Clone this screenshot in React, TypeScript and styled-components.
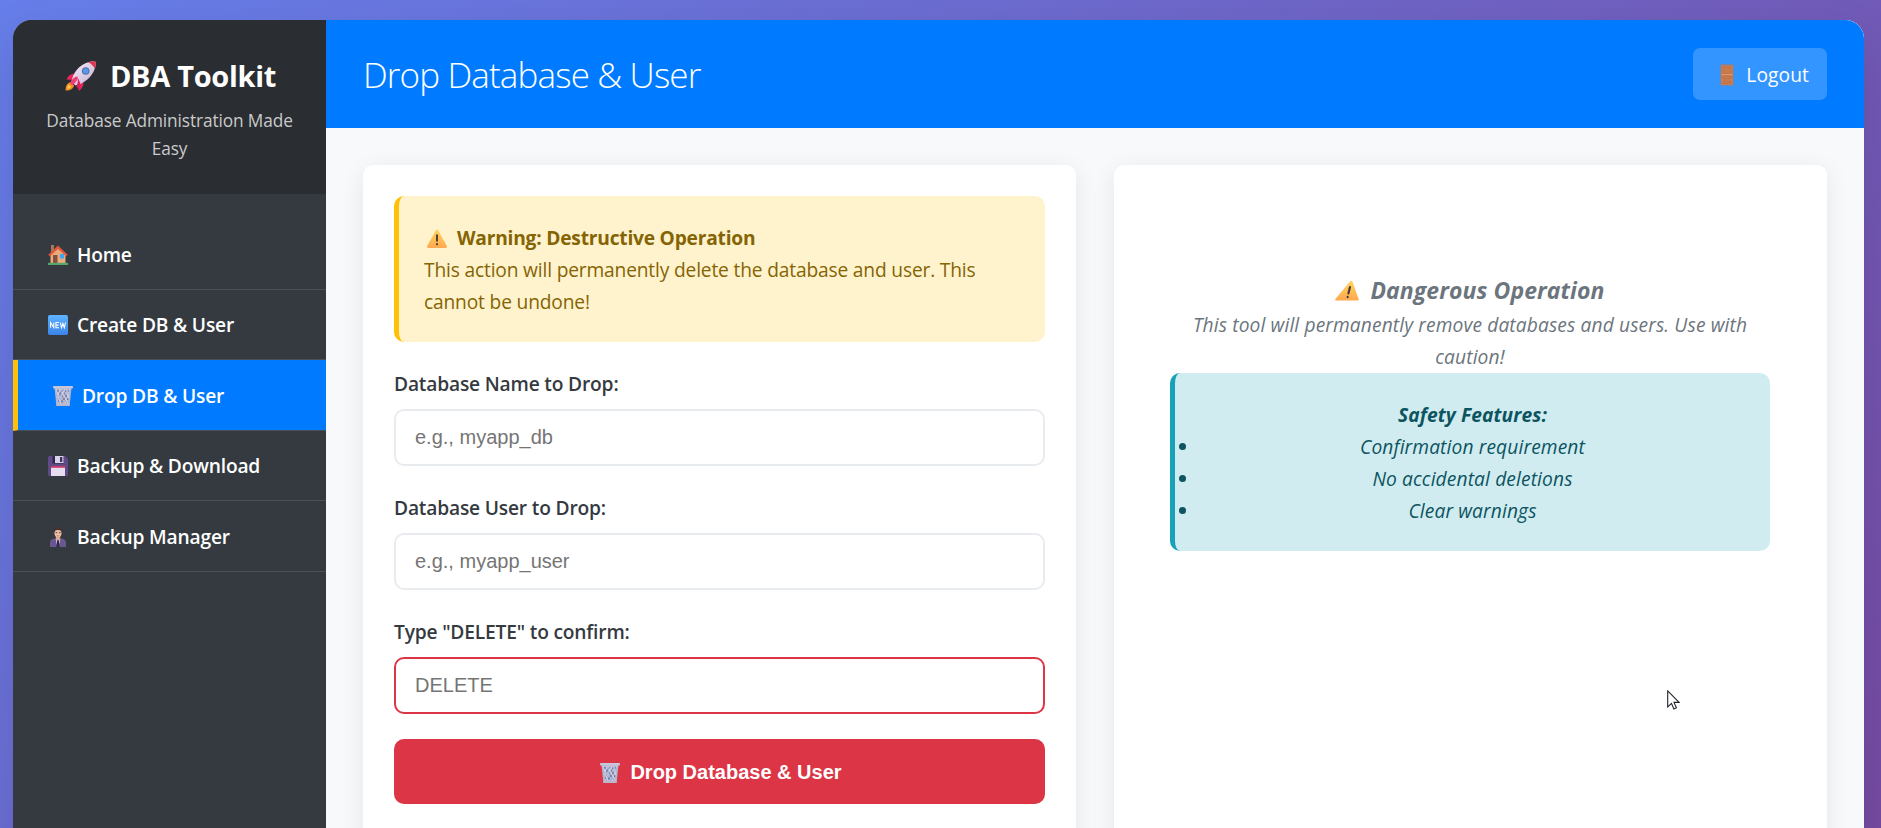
import React from 'react';
import styled, { createGlobalStyle } from 'styled-components';

const GlobalStyle = createGlobalStyle`
  *, *::before, *::after { box-sizing: border-box; margin: 0; padding: 0; }
  body {
    font-family: 'Open Sans', 'Noto Sans', sans-serif;
    font-size: 19.2px;
    line-height: 32px;
    letter-spacing: -0.17px;
    color: #343a40;
    overflow: hidden;
  }
`;

const Page = styled.div`
  position: relative;
  height: 828px;
  padding: 20px 17px 0 13px;
  overflow: hidden;
  background: linear-gradient(135deg, #667eea 0%, #764ba2 100%);
`;

const Shell = styled.div`
  display: flex;
  height: 870px;
  border-radius: 18.75px;
  overflow: hidden;
  background: #fff;
  box-shadow: 0 20px 50px rgba(0, 0, 0, 0.12);
`;

const Sidebar = styled.aside`
  flex: 0 0 313px;
  background: #343a40;
  color: #fff;
`;

const Brand = styled.div`
  height: 174px;
  padding: 32px 25px 0;
  text-align: center;
  background: #2a2d31;
`;

const BrandTitle = styled.h1`
  display: flex;
  justify-content: center;
  align-items: center;
  gap: 14px;
  height: 48px;
  margin-bottom: 7px;
  padding-left: 2px;
  font-size: 29px;
  font-weight: 700;
  letter-spacing: -0.3px;
`;

const BrandText = styled.p`
  font-size: 17.3px;
  line-height: 28px;
  letter-spacing: -0.12px;
  color: #c9cacb;
`;

const Nav = styled.nav`
  padding-top: 25px;
`;

const NavItem = styled.a<{ $active?: boolean }>`
  display: flex;
  align-items: center;
  gap: 9px;
  height: 70.5px;
  padding: 2px 0 0 35px;
  border-bottom: 1px solid #495057;
  border-left: ${(p) => (p.$active ? '5px solid #ffc107' : '0')};
  background: ${(p) => (p.$active ? '#007bff' : 'transparent')};
  color: #fff;
  font-weight: 600;
  letter-spacing: -0.19px;
`;

const Main = styled.main`
  flex: 1;
  background: #f8f9fa;
`;

const TopBar = styled.header`
  display: flex;
  justify-content: space-between;
  align-items: center;
  height: 108px;
  padding: 0 37px;
  background: #007bff;
  color: #fff;
`;

const PageTitle = styled.h2`
  padding-top: 2px;
  font-size: 35px;
  font-weight: 300;
  letter-spacing: -0.86px;
`;

const Logout = styled.a`
  display: flex;
  align-items: center;
  justify-content: flex-end;
  gap: 11px;
  width: 134px;
  height: 52px;
  padding: 2px 18px 0 0;
  border-radius: 7px;
  background: rgba(255, 255, 255, 0.2);
  letter-spacing: 0.1px;
`;

const Content = styled.div`
  display: grid;
  grid-template-columns: 1fr 1fr;
  gap: 38px;
  height: 800px;
  padding: 37px;
`;

const Card = styled.section`
  padding: 31px;
  border-radius: 10px;
  background: #fff;
  box-shadow: 0 5px 25px rgba(0, 0, 0, 0.08);
`;

const Alert = styled.div<{ $tone: 'warning' | 'info' }>`
  padding: 26px 25px 24px 25px;
  border-left: 5px solid ${(p) => (p.$tone === 'warning' ? '#ffc107' : '#17a2b8')};
  border-radius: 10px;
  background: ${(p) => (p.$tone === 'warning' ? '#fff3cd' : '#d1ecf1')};
  color: ${(p) => (p.$tone === 'warning' ? '#856404' : '#0c5460')};
`;

const AlertTitle = styled.strong`
  display: flex;
  align-items: center;
  gap: 10px;
  padding-left: 3px;
  font-weight: 700;
  letter-spacing: -0.22px;
`;

const Field = styled.div`
  margin-top: 25px;
`;

const Label = styled.label`
  display: block;
  padding-top: 1px;
  margin-bottom: 9px;
  font-weight: 600;
  letter-spacing: -0.18px;
`;

const Input = styled.input<{ $danger?: boolean }>`
  display: block;
  width: 100%;
  height: 57px;
  padding: 0 19px;
  border: 2px solid ${(p) => (p.$danger ? '#dc3545' : '#e9ecef')};
  border-radius: 10px;
  background: #fff;
  font: 20px 'Liberation Sans', Arial, sans-serif;
  &::placeholder { color: #757575; opacity: 1; }
`;

const DropButton = styled.button`
  display: flex;
  justify-content: center;
  align-items: center;
  gap: 10px;
  width: 100%;
  height: 65px;
  margin-top: 25px;
  padding: 2px 0 0 3px;
  border: 0;
  border-radius: 10px;
  background: #dc3545;
  color: #fff;
  font: bold 20px 'Liberation Sans', Arial, sans-serif;
`;

const Notice = styled.div`
  padding: 75px 26px 75px 25px;
  text-align: center;
  font-style: italic;
  letter-spacing: 0.12px;
  color: #6c757d;
`;

const NoticeTitle = styled.h3`
  display: flex;
  justify-content: center;
  align-items: center;
  gap: 11px;
  height: 38px;
  font-size: 23px;
  font-weight: 700;
  letter-spacing: 0.08px;
`;

const Features = styled.ul`
  list-style: disc outside;
`;

const Icon = styled.svg`
  flex: none;
  display: block;
`;

const Pointer = styled.svg`
  position: absolute;
  left: 1667px;
  top: 690px;
`;

const RocketIcon = () => (
  <Icon width="31" height="30" viewBox="0 0 31 30">
    <defs>
      <linearGradient id="hull" x1="0" y1="0" x2="1" y2="1">
        <stop offset="0" stopColor="#f7eefa" />
        <stop offset="1" stopColor="#c3aed2" />
      </linearGradient>
    </defs>
    <path d="M6 21C2 22 .5 25 .6 29.4c4.500.2 7.500-1.200 8.500-5.200z" fill="#f08a24" />
    <path d="M4 23.500c-1.500 1-2 2.700-2 4.500 2 0 3.500-.7 4.500-2.200z" fill="#ffc14d" />
    <path d="M10 12.500C6 12.500 3 14.500 1.500 18.500l7 .5zM18.500 20.500c.2 4-1.200 7-4.500 9.300l-2-7z" fill="#e8275c" />
    <path d="M6.500 20.500C8 12 14 3.500 24 1c2.500-.6 4.800-.6 6.500-.3.3 2 .2 4-.5 6.300C27 16.500 19 22.500 10.500 24.500z" fill="url(#hull)" />
    <path d="M23 1.300c2.800-.8 5.500-.9 7.500-.6.3 2 .1 4.300-.6 6.800C28 4.500 26 2.500 23 1.300z" fill="#e9304b" />
    <path d="M12.500 15.500c.5 2.500-1 6-5.500 8.500l-2-2c1.500-3.500 4.500-6.500 7.500-6.500z" fill="#f23a74" />
    <path d="M12.200 16.500c1 2.500 1 5-.8 8.800l2.800 4.200c1.800-4 1.500-9-2-13z" fill="#d91f5c" />
    <circle cx="20.700" cy="10" r="3.800" fill="#5b6f9d" />
    <circle cx="20.700" cy="10" r="2.700" fill="#4f9cf0" />
  </Icon>
);

const HomeIcon = () => (
  <Icon width="20" height="20" viewBox="0 0 20 20">
    <path d="M3 0h3v7H3z" fill="#a7765c" />
    <path d="M2.500 9 10 2l7.500 7v9.500h-15z" fill="#e9aa7c" />
    <path d="M10 .4.300 9.800l1.500 1.500L10 4l8.200 7.300 1.500-1.500z" fill="#e2573b" />
    <path d="M5 10h4.500v8.500H5z" fill="#86503f" />
    <path d="M12 9h4v4.500h-4z" fill="#3aa5f3" />
    <path d="M0 17.800h20V20H0z" fill="#55a66c" />
  </Icon>
);

const NewIcon = () => (
  <Icon width="20" height="20" viewBox="0 0 20 20">
    <defs>
      <linearGradient id="tile" x1="0" y1="0" x2="0" y2="1">
        <stop offset="0" stopColor="#5db4ff" />
        <stop offset="1" stopColor="#3b83e8" />
      </linearGradient>
    </defs>
    <rect width="20" height="20" rx="1.800" fill="url(#tile)" />
    <path
      d="M2.600 12.700V7.500l3.200 5.200V7.500M11 7.500H7.900v5.200H11M7.900 10.100h2.700M12.300 7.500l1.200 5.200 1.400-4.200 1.400 4.200 1.200-5.200"
      fill="none" stroke="#fff" strokeWidth="1.050"
    />
  </Icon>
);

const TrashIcon = () => (
  <Icon width="20" height="20" viewBox="0 0 20 20">
    <path d="M1.500 2h17l-1.800 17a1 1 0 0 1-1 .8H4.300a1 1 0 0 1-1-.8z" fill="#b3b5cf" />
    <path
      d="M5 4v2M9 4v2M13 4v2M16 4v2M7 6.500v2.200M11 6.500v2.200M15 6.500v2.200M5 9v2.200M9 9v2.200M13 9v2.200M7 11.700v2.200M11 11.700v2.200M14.500 11.700v2.200M9 14.300v2.200M13 14.300v2.200M5.800 14.300v2.200"
      stroke="#576da9" strokeWidth="1.300"
    />
    <path d="M3 3l5 15M8 3l7 15M13 3l3 9M17 3l-5 15M12 3 5 18M7 3l-3 9" stroke="#dfdcec" strokeWidth=".7" />
    <rect width="20" height="2.600" rx="1" fill="#c9c6db" />
    <rect x="3" y="17.700" width="14" height="2.200" rx=".8" fill="#b9b6cf" />
  </Icon>
);

const DiskIcon = () => (
  <Icon width="20" height="20" viewBox="0 0 20 20">
    <path d="M1.500 0h15.700L20 2.700v15.800a1.500 1.500 0 0 1-1.500 1.500h-17A1.500 1.500 0 0 1 0 18.500v-17A1.500 1.500 0 0 1 1.500 0z" fill="#5d4a86" />
    <path d="M4.500 0h11v7.500h-11z" fill="#33264f" />
    <path d="M7 0h8.500v7H7z" fill="#d9d3e8" />
    <path d="M12 1h2.300v5H12z" fill="#40305f" />
    <path d="M3 10h14v10H3z" fill="#e6def0" />
    <path d="M3 9.800h14v2H3z" fill="#c83c68" />
  </Icon>
);

const ManagerIcon = () => (
  <Icon width="20" height="20" viewBox="0 0 20 20">
    <path d="M2 20v-4.500C2 13 4 12 6.500 11.500L10 14l3.500-2.500C16 12 18 13 18 15.500V20z" fill="#6a5790" />
    <path d="M7.500 11h5l-.8 5-1.700 4-1.700-4z" fill="#c5bdd8" />
    <path d="M9.300 12.500h1.500l.8 7.500H8.500z" fill="#32284b" />
    <path d="M8 8h4v4l-2 1.500L8 12z" fill="#dba38d" />
    <ellipse cx="10" cy="6" rx="3.600" ry="4.600" fill="#f1c1a7" />
    <path d="M6 6C5.200 2 7 0 10 0s4.800 2 4 6c-.5-2-1.300-3-4-3S6.500 4 6 6z" fill="#45332f" />
    <path d="M7.600 5.200h1.600v1H7.600zM10.900 5.200h1.600v1h-1.600z" fill="#54372f" />
    <path d="M8.700 8.500h2.700v.8H8.700z" fill="#c86566" />
  </Icon>
);

const DoorIcon = () => (
  <Icon width="16" height="22" viewBox="0 0 16 22">
    <path d="M1.500.500h13v21h-13z" fill="#a97c6d" />
    <path d="M2.700 1.700h10.600v19H2.700z" fill="#d38455" />
    <path d="M4 3h8v7H4zM4 12h8v3H4zM4 17h8v2.500H4z" fill="#ca7b4e" stroke="#b56c4a" strokeWidth=".7" />
    <path d="M2.700 10.500h10.600" stroke="#e59a5c" />
  </Icon>
);

const WarningIcon = ({ size = 20, slant = false }: { size?: number; slant?: boolean }) => (
  <Icon width={slant ? size + 2 : size} height={size - 1} viewBox={slant ? '0 0 24 20' : '0 0 20 19'}>
    <defs>
      <linearGradient id={slant ? 'sign-slant' : 'sign'} x1="0" y1="0" x2="0" y2="1">
        <stop offset="0" stopColor="#ffd35a" />
        <stop offset="1" stopColor="#ffa94f" />
      </linearGradient>
    </defs>
    {slant ? (
      <>
        <path d="M15.500.600Q17 0 17.500 1.200L23.600 18.500Q24 20 22.500 20H1Q-.4 19.700.600 18.300z" fill="url(#sign-slant)" />
        <path d="M15 6.500 13.400 13M12.700 16.300l-.1.500" stroke="#3b3340" strokeWidth="2" strokeLinecap="round" />
      </>
    ) : (
      <>
        <path d="M9 1Q10-.2 11 1L19.800 17Q20.300 19 18.500 19h-17Q-.3 19 .2 17z" fill="url(#sign)" />
        <path d="M10 6.200v5.600M10 15v.4" stroke="#433a3c" strokeWidth="1.900" strokeLinecap="round" />
      </>
    )}
  </Icon>
);

const navItems = [
  { label: 'Home', icon: <HomeIcon /> },
  { label: 'Create DB & User', icon: <NewIcon /> },
  { label: 'Drop DB & User', icon: <TrashIcon />, active: true },
  { label: 'Backup & Download', icon: <DiskIcon /> },
  { label: 'Backup Manager', icon: <ManagerIcon /> },
];

const fields = [
  { label: 'Database Name to Drop:', placeholder: 'e.g., myapp_db' },
  { label: 'Database User to Drop:', placeholder: 'e.g., myapp_user' },
  { label: 'Type "DELETE" to confirm:', placeholder: 'DELETE', danger: true },
];

export default function App() {
  return (
    <>
      <GlobalStyle />
      <Page>
        <Shell>
          <Sidebar>
            <Brand>
              <BrandTitle><RocketIcon />DBA Toolkit</BrandTitle>
              <BrandText>Database Administration Made Easy</BrandText>
            </Brand>
            <Nav>
              {navItems.map((item) => (
                <NavItem key={item.label} $active={item.active}>{item.icon}{item.label}</NavItem>
              ))}
            </Nav>
          </Sidebar>
          <Main>
            <TopBar>
              <PageTitle>Drop Database &amp; User</PageTitle>
              <Logout><DoorIcon />Logout</Logout>
            </TopBar>
            <Content>
              <Card>
                <Alert $tone="warning">
                  <AlertTitle><WarningIcon />Warning: Destructive Operation</AlertTitle>
                  This action will permanently delete the database and user. This cannot be undone!
                </Alert>
                {fields.map((f) => (
                  <Field key={f.label}>
                    <Label>{f.label}</Label>
                    <Input placeholder={f.placeholder} $danger={f.danger} />
                  </Field>
                ))}
                <DropButton><TrashIcon />Drop Database &amp; User</DropButton>
              </Card>
              <Card>
                <Notice>
                  <NoticeTitle><WarningIcon size={22} slant />Dangerous Operation</NoticeTitle>
                  <p>This tool will permanently remove databases and users. Use with caution!</p>
                  <Alert $tone="info">
                    <strong>Safety Features:</strong>
                    <Features>
                      <li>Confirmation requirement</li>
                      <li>No accidental deletions</li>
                      <li>Clear warnings</li>
                    </Features>
                  </Alert>
                </Notice>
              </Card>
            </Content>
          </Main>
        </Shell>
        <Pointer width="13" height="20" viewBox="0 0 13 20">
          <path d="M.7.900v16l3.800-3.500 2.400 5.500 2.500-1.100L7 12.400h5.100z" fill="#fff" stroke="#22222c" strokeWidth="1.100" />
        </Pointer>
      </Page>
    </>
  );
}
